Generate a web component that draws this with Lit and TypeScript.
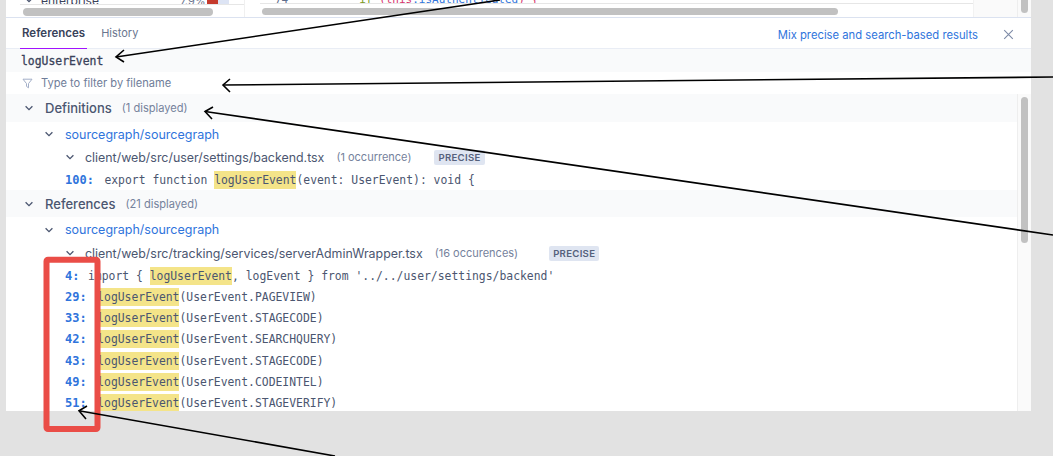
import { LitElement, html, css, svg } from "lit";
import { customElement } from "lit/decorators.js";

const chevron = html`<svg class="chev" viewBox="0 0 10 10"><path d="M1.6 3.2 5 6.6l3.4-3.4" fill="none" stroke="currentColor" stroke-width="1.3"/></svg>`;

const arrow = (points: string, head: string) => svg`
  <polyline points=${points} fill="none" stroke="#000" stroke-width="1.6"/>
  <polyline points=${head} fill="none" stroke="#000" stroke-width="1.6"/>`;

const calls: [string, string][] = [
  ["29", "(UserEvent.PAGEVIEW)"],
  ["33", "(UserEvent.STAGECODE)"],
  ["42", "(UserEvent.SEARCHQUERY)"],
  ["43", "(UserEvent.STAGECODE)"],
  ["49", "(UserEvent.CODEINTEL)"],
  ["51", "(UserEvent.STAGEVERIFY)"],
];

@customElement("app-root")
export class AppRoot extends LitElement {
  static styles = css`
    :host { display: block; width: 1053px; height: 456px; background: #e2e2e2; overflow: hidden; position: relative; font-family: Inter, "Noto Sans", sans-serif; color: #4b5670; }
    .win { margin-left: 6px; width: 1025px; height: 411px; background: #fff; display: flex; flex-direction: column; overflow: hidden; }

    .top { height: 17px; display: flex; background: #fafafa; flex: none; border-bottom: 1px solid #dbe2f0; }
    .pane-l { width: 224px; border-right: 1px solid #f0f0f0; background: #fff; padding-left: 14px; flex: none; }
    .clip { height: 4px; overflow: hidden; border-bottom: 1px solid #e6e6e6; display: flex; align-items: flex-end; font-size: 12px; line-height: 12px; }
    .clip > * { flex: none; }
    .ent { margin: 0 0 -3px 4px; display: flex; gap: 7px; color: #39425a; width: 156px; }
    .pct { color: #6b7690; margin-bottom: -3px; width: 27px; font-size: 11px; }
    .bar-r { width: 11px; height: 4px; background: #c53a2d; }
    .bar-b { width: 11px; height: 4px; background: #dde4f4; }
    .hthumb { height: 8px; border-radius: 4px; background: #c1c1c1; margin-top: 3px; }
    .pane-l .hthumb { margin-left: 3px; width: 190px; }
    .pane-m { width: 713px; padding-left: 15px; background: #fff; flex: none; border-right: 1px solid #f2f2f2; }
    .pane-m .clip { height: 3px; font-family: "DejaVu Sans Mono", monospace; font-size: 11px; }
    .pane-m .hthumb { width: 576px; margin-left: 2px; margin-top: 4px; height: 7px; }
    .ln { color: #5e6e8c; margin: 0 71px -3px 15px; }
    .cd { color: #7a9a20; margin-bottom: -3px; white-space: pre; }
    .cd i { font-style: normal; color: #d6336c; }
    .cd u { text-decoration: none; color: #2f74dc; }
    .pane-e { flex: 1; display: flex; justify-content: flex-end; }
    .vtrack { width: 13px; border-left: 1px solid #eee; display: flex; justify-content: center; background: #fafafa; flex: none; }
    .vtop { width: 7px; height: 13px; border-radius: 0 0 4px 4px; background: #c1c1c1; }

    .tabs { height: 30px; flex: none; display: flex; align-items: center; border-bottom: 1px solid #e9edf5; font-size: 11.4px; padding: 0 17px 0 14px; }
    .tab { color: #6a768f; margin-left: 14px; font-size: 11px; }
    .tab.active { color: #39425a; font-size: 11.5px; font-weight: 600; margin-left: 0; display: flex; align-items: center; padding: 0 2px; border-bottom: 2px solid #a112ff; height: 31px; margin-bottom: -1px; }
    .mix { margin-left: auto; color: #2f74dc; font-size: 11.25px; margin-right: 25px; margin-top: 3px; }
    .close { width: 11px; height: 11px; color: #7d8aa6; flex: none; margin-top: 2px; }

    .sym { height: 23px; flex: none; background: #f9fafb; padding-left: 15px; display: flex; align-items: center; font-family: "DejaVu Sans Mono", monospace; font-size: 11.4px; color: #39425a; -webkit-text-stroke: 0.3px #39425a; }
    .filter { height: 22px; flex: none; display: flex; align-items: center; padding-left: 16px; gap: 8px; font-size: 11.1px; color: #6f7d99; }
    .funnel { width: 11px; height: 11px; color: #a3afc8; flex: none; }

    .body { flex: 1; display: flex; min-height: 0; }
    .list { flex: 1; min-width: 0; overflow: hidden; }
    .track { width: 13px; flex: none; background: #fafafa; border-left: 1px solid #eee; display: flex; justify-content: center; padding-top: 3px; }
    .thumb { width: 7px; height: 146px; border-radius: 4px; background: #c1c1c1; }

    .chev { width: 10px; height: 10px; flex: none; color: #4b5670; }
    .sec { background: #f9fafb; display: flex; align-items: center; padding-left: 18px; font-size: 13px; font-weight: 500; color: #4b5670; }
    .sec .chev { margin-right: 11px; }
    .sec small { font-size: 11.1px; font-weight: 400; color: #75829c; margin-left: 10px; }
    .s1 { height: 28px; }
    .s2 { height: 27px; margin-bottom: 1px; }
    .repo { height: 23.5px; box-sizing: border-box; padding-top: 1px; display: flex; align-items: center; padding-left: 38px; font-size: 12.5px; color: #2f74dc; }
    .repo.second { padding-top: 0; }
    .repo .chev { margin-right: 11px; }
    .file { height: 23.5px; display: flex; align-items: center; padding-left: 59px; font-size: 12.4px; color: #4b5670; }
    .file .chev { margin-right: 10px; }
    .file small { font-size: 11px; color: #75829c; margin-left: 12px; }
    .badge { font-size: 9.6px; font-weight: 600; letter-spacing: 0.3px; background: #dfe5f1; color: #55617c; padding: 2px 4px; border-radius: 2px; margin-left: 23px; line-height: 11px; }
    .badge.wide { margin-left: 31px; }
    .code { height: 21.2px; display: flex; align-items: center; padding-left: 59px; font-family: "DejaVu Sans Mono", monospace; font-size: 11.4px; color: #4b5670; white-space: pre; }
    .code b { color: #2f74dc; font-weight: 700; font-size: 12px; margin-right: 10.5px; }
    .code b.short { margin-right: 8.5px; }
    .code mark { background: #f4e489; color: #4b5670; padding: 2px 0; }

    .over { position: absolute; inset: 0; width: 1053px; height: 456px; pointer-events: none; }
  `;

  render() {
    return html`
      <div class="win">
        <div class="top">
          <div class="pane-l">
            <div class="clip">
              <div class="ent">${chevron}<span>enterprise</span></div>
              <span class="pct">7.9%</span><span class="bar-r"></span><span class="bar-b"></span>
            </div>
            <div class="hthumb"></div>
          </div>
          <div class="pane-m">
            <div class="clip"><span class="ln">74</span><span class="cd">if <i>(this</i><u>.isAuthenticated</u><i>) {</i></span></div>
            <div class="hthumb"></div>
          </div>
          <div class="pane-e"><div class="vtrack"><div class="vtop"></div></div></div>
        </div>

        <div class="tabs">
          <div class="tab active">References</div>
          <div class="tab">History</div>
          <div class="mix">Mix precise and search-based results</div>
          <svg class="close" viewBox="0 0 11 11"><path d="M1.2 1.2l8.6 8.6M9.8 1.2 1.2 9.8" stroke="currentColor" stroke-width="1.1" fill="none"/></svg>
        </div>

        <div class="sym">logUserEvent</div>
        <div class="filter">
          <svg class="funnel" viewBox="0 0 11 11"><path d="M1 1.2h9L6.5 5.6v4.2L4.5 8.4V5.6z" fill="none" stroke="currentColor" stroke-width="1"/></svg>
          <span>Type to filter by filename</span>
        </div>

        <div class="body">
          <div class="list">
            <div class="sec s1">${chevron}<span>Definitions</span><small>(1 displayed)</small></div>
            <div class="repo">${chevron}<span>sourcegraph/sourcegraph</span></div>
            <div class="file">${chevron}<span>client/web/src/user/settings/backend.tsx</span><small>(1 occurrence)</small><span class="badge">PRECISE</span></div>
            <div class="code"><b>100:</b><span>export function <mark>logUserEvent</mark>(event: UserEvent): void {</span></div>

            <div class="sec s2">${chevron}<span>References</span><small>(21 displayed)</small></div>
            <div class="repo second">${chevron}<span>sourcegraph/sourcegraph</span></div>
            <div class="file">${chevron}<span>client/web/src/tracking/services/serverAdminWrapper.tsx</span><small>(16 occurences)</small><span class="badge wide">PRECISE</span></div>
            <div class="code"><b class="short">4:</b><span>import { <mark>logUserEvent</mark>, logEvent } from '../../user/settings/backend'</span></div>
            ${calls.map(
              ([n, rest]) => html`<div class="code"><b>${n}:</b><span><mark>logUserEvent</mark>${rest}</span></div>`
            )}
          </div>
          <div class="track"><div class="thumb"></div></div>
        </div>
      </div>

      <svg class="over" viewBox="0 0 1053 456">
        <rect x="46.5" y="259.7" width="51" height="169.3" rx="1.5" fill="none" stroke="#ea4d47" stroke-width="6"/>
        ${arrow("500,0 116,57", "124,50 116,57 124,62")}
        ${arrow("1053,77 223,85", "230,79 223,85 230,92")}
        ${arrow("1053,235 205,111.5", "213,107 205,111.5 212,119")}
        ${arrow("335,456 79,410.7", "87,406 79,410.7 86,419")}
      </svg>
    `;
  }
}
